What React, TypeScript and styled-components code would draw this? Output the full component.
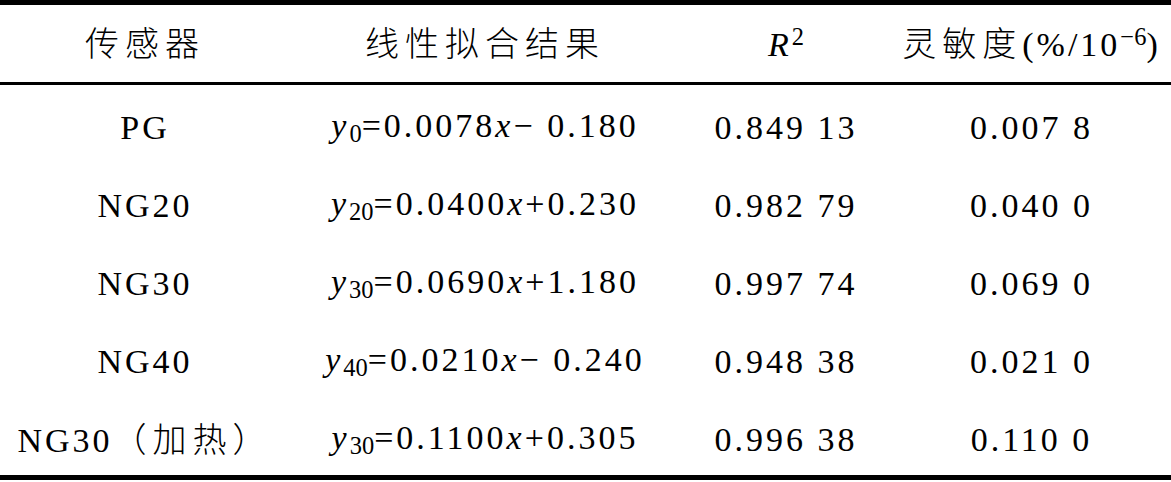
import React from 'react';
import styled, { createGlobalStyle } from 'styled-components';

const GlobalStyle = createGlobalStyle`
  html, body {
    margin: 0;
    padding: 0;
    background: #fff;
  }
  body {
    font-family: 'Liberation Serif', 'Noto Sans CJK SC', serif;
    color: #000;
  }
`;

const Table = styled.table`
  width: 1171px;
  border-collapse: separate;
  border-spacing: 0;
  table-layout: fixed;
  font-family: 'Liberation Serif', 'Noto Sans CJK SC', serif;
  font-size: 34px;
  letter-spacing: 3px;
  border-top: 5px solid #000;
  border-bottom: 5px solid #000;
`;

const HeadCell = styled.th`
  height: 80px;
  box-sizing: border-box;
  padding: 0;
  border-bottom: 3px solid #000;
  font-weight: normal;
  text-align: center;
  vertical-align: middle;
  white-space: nowrap;
  line-height: 1;
`;

const Cell = styled.td`
  height: 78px;
  box-sizing: border-box;
  padding: 7px 0 0;
  text-align: center;
  vertical-align: middle;
  white-space: nowrap;
  line-height: 1;
`;

const Han = styled.span`
  font-family: 'Noto Sans CJK SC', sans-serif;
  font-weight: 300;
  letter-spacing: 6px;
`;

const Var = styled.i`
  font-style: italic;
`;

const Sub = styled.sub`
  font-size: 0.72em;
  vertical-align: -0.22em;
  letter-spacing: 0;
`;

const Sup = styled.sup`
  font-size: 0.72em;
  vertical-align: 0.45em;
  letter-spacing: 0;
`;

type Fit = {
  name: React.ReactNode;
  sub: string;
  k: string;
  sign: string;
  b: string;
  r2: string;
  sens: string;
};

const rows: Fit[] = [
  { name: 'PG', sub: '0', k: '0.0078', sign: '−\u00a0', b: '0.180', r2: '0.849 13', sens: '0.007 8' },
  { name: 'NG20', sub: '20', k: '0.0400', sign: '+', b: '0.230', r2: '0.982 79', sens: '0.040 0' },
  { name: 'NG30', sub: '30', k: '0.0690', sign: '+', b: '1.180', r2: '0.997 74', sens: '0.069 0' },
  { name: 'NG40', sub: '40', k: '0.0210', sign: '−\u00a0', b: '0.240', r2: '0.948 38', sens: '0.021 0' },
  {
    name: (
      <>
        NG30<Han>（加热）</Han>
      </>
    ),
    sub: '30',
    k: '0.1100',
    sign: '+',
    b: '0.305',
    r2: '0.996 38',
    sens: '0.110 0',
  },
];

const App: React.FC = () => (
  <>
    <GlobalStyle />
    <Table>
      <colgroup>
        <col style={{ width: 290 }} />
        <col style={{ width: 390 }} />
        <col style={{ width: 212 }} />
        <col style={{ width: 279 }} />
      </colgroup>
      <thead>
        <tr>
          <HeadCell>
            <Han>传感器</Han>
          </HeadCell>
          <HeadCell>
            <Han>线性拟合结果</Han>
          </HeadCell>
          <HeadCell>
            <Var>R</Var>
            <Sup>2</Sup>
          </HeadCell>
          <HeadCell>
            <Han>灵敏度</Han>(%/10<Sup>−6</Sup>)
          </HeadCell>
        </tr>
      </thead>
      <tbody>
        {rows.map((r, i) => (
          <tr key={i}>
            <Cell>{r.name}</Cell>
            <Cell>
              <Var>y</Var>
              <Sub>{r.sub}</Sub>={r.k}
              <Var>x</Var>
              {r.sign}
              {r.b}
            </Cell>
            <Cell>{r.r2}</Cell>
            <Cell>{r.sens}</Cell>
          </tr>
        ))}
      </tbody>
    </Table>
  </>
);

export default App;
